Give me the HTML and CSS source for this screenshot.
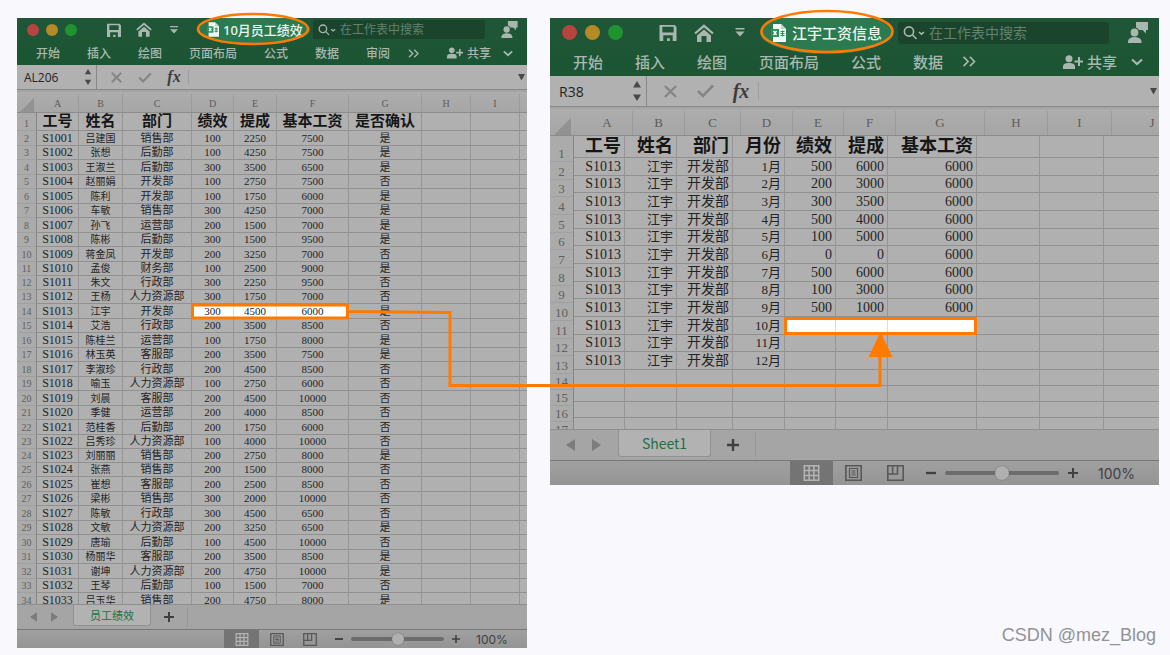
FILE: index.html
```html
<!DOCTYPE html>
<html lang="zh-CN">
<head>
<meta charset="utf-8">
<title>员工绩效与工资信息</title>
<link rel="stylesheet" href="styles.css">
</head>
<body>
<svg class="symbols" aria-hidden="true">
  <symbol id="save" viewBox="0 0 18 18"><path fill="currentColor" fill-rule="evenodd" d="M0 1h16l2 2v15H0zM3 3v6h12V3zM4 12v6h4v-3h3v3h3v-6z"/></symbol>
  <symbol id="home" viewBox="0 0 20 18"><path fill="none" stroke="currentColor" stroke-width="2.2" d="M1 9.5 10 1.8l9 7.7"/><path fill="currentColor" d="M3 11.5 10 5.5l7 6V18h-4.500v-6h-5v6H3z"/></symbol>
  <symbol id="more" viewBox="0 0 10 10"><path fill="currentColor" d="M0 0h10v1.600H0zM0 4h10L5 9.500z"/></symbol>
  <symbol id="book" viewBox="0 0 15 18"><path fill="#f2f7f3" d="M2 0h8l5 5v13H2z"/><path fill="#b9d8c5" d="M10 0v5h5z"/><path fill="#2b9059" d="M0 5h8v8H0z"/><path stroke="#fff" stroke-width="1.300" d="m2.500 7 3 4m0-4-3 4"/><path stroke="#2b9059" d="M9.500 7.500h4m-4 2h4m-4 2h4m-2-5v6"/></symbol>
  <symbol id="search" viewBox="0 0 22 14"><g fill="none" stroke="currentColor" stroke-width="1.600"><circle cx="6" cy="5.500" r="4.600"/><path d="m9.500 9 4 4M16 6l2.500 2.200L21 6"/></g></symbol>
  <symbol id="person" viewBox="0 0 20 21"><path fill="currentColor" d="M8 0h12v8h-2v3.500L14.500 8H11a4.500 4.500 0 0 0-3-2.500z"/><circle cx="6.500" cy="10.500" r="3.900" fill="currentColor"/><path fill="currentColor" d="M0 21v-2c1-3 3-4 6.500-4s6 1 7 4v2z"/></symbol>
  <symbol id="share" viewBox="0 0 20 14"><circle cx="6" cy="3.700" r="3.500" fill="currentColor"/><path fill="currentColor" d="M0 14v-3c.5-2 2-3 6-3s5.500 1 6 3v3z"/><path stroke="currentColor" stroke-width="2" d="M16 2v9m-4.500-4.500H20"/></symbol>
  <symbol id="chevron" viewBox="0 0 12 8"><path fill="none" stroke="currentColor" stroke-width="2.200" d="m1 1.500 5 4.500 5-4.500"/></symbol>
  <symbol id="double" viewBox="0 0 14 12"><path fill="none" stroke="currentColor" stroke-width="1.800" d="m1 1 5 5-5 5M8 1l5 5-5 5"/></symbol>
  <symbol id="stepper" viewBox="0 0 8 20"><path fill="currentColor" d="M0 6.500 4 0l4 6.500zM0 13.500 4 20l4-6.500z"/></symbol>
  <symbol id="cross" viewBox="0 0 14 14"><path stroke="currentColor" stroke-width="2.400" d="m1 1 12 12M13 1 1 13"/></symbol>
  <symbol id="check" viewBox="0 0 17 14"><path fill="none" stroke="currentColor" stroke-width="2.600" d="m1 7 5 5L16 1.500"/></symbol>
  <symbol id="down" viewBox="0 0 8 8"><path fill="currentColor" d="M0 0h8L4 7.500z"/></symbol>
  <symbol id="left" viewBox="0 0 9 12"><path fill="currentColor" d="M9 0v12L0 6z"/></symbol>
  <symbol id="right" viewBox="0 0 9 12"><path fill="currentColor" d="M0 0v12l9-6z"/></symbol>
  <symbol id="plus" viewBox="0 0 12 12"><path stroke="currentColor" stroke-width="2.400" d="M6 0v12M0 6h12"/></symbol>
  <symbol id="minus" viewBox="0 0 12 12"><path stroke="currentColor" stroke-width="2.800" d="M0 6h12"/></symbol>
  <symbol id="cells" viewBox="0 0 16 16"><path fill="none" stroke="currentColor" stroke-width="1.500" d="M.8.8h14.400v14.400H.8zM.8 5.600h14.400M.8 10.400h14.400M5.600.8v14.400M10.400.8v14.400"/></symbol>
  <symbol id="page" viewBox="0 0 17 16"><path fill="none" stroke="currentColor" stroke-width="1.600" d="M.8.8h15.400v14.400H.8z"/><path fill="none" stroke="currentColor" stroke-width="1.200" d="M4.500 3.500h8v9h-8zM6.500 6h4M6.500 8h4M6.500 10h4"/></symbol>
  <symbol id="breaks" viewBox="0 0 17 16"><path fill="none" stroke="currentColor" stroke-width="1.600" d="M.8.8h15.400v14.400H.8zM.8 9h9.700V.8M5.600.8V9"/></symbol>
</svg>

<main class="board">
  <section class="window window--performance">
    <header class="ribbon">
      <div class="titlebar">
        <span class="lights"><i class="light red"></i><i class="light amber"></i><i class="light green"></i></span>
        <button class="save" aria-label="保存"><svg><use href="#save"/></svg></button>
        <button class="home" aria-label="主页"><svg><use href="#home"/></svg></button>
        <button class="more" aria-label="更多"><svg><use href="#more"/></svg></button>
        <h1 class="title"><svg><use href="#book"/></svg><span>10月员工绩效</span></h1>
        <label class="search"><svg><use href="#search"/></svg><input type="search" placeholder="在工作表中搜索" aria-label="在工作表中搜索"></label>
        <button class="person" aria-label="账户"><svg><use href="#person"/></svg></button>
      </div>
      <nav class="menu">
        <button>开始</button><button>插入</button><button>绘图</button><button>页面布局</button><button>公式</button><button>数据</button><button>审阅</button>
        <button class="double" aria-label="更多选项卡"><svg><use href="#double"/></svg></button>
        <button class="share"><svg><use href="#share"/></svg>共享</button>
        <button class="chevron" aria-label="折叠"><svg><use href="#chevron"/></svg></button>
      </nav>
    </header>
    <div class="formula">
      <input class="name-box" value="AL206" aria-label="名称框">
      <svg class="stepper"><use href="#stepper"/></svg>
      <button class="cross" aria-label="取消"><svg><use href="#cross"/></svg></button>
      <button class="check" aria-label="确认"><svg><use href="#check"/></svg></button>
      <button class="fx">fx</button>
      <input class="expression" aria-label="公式">
      <button class="expand" aria-label="展开"><svg><use href="#down"/></svg></button>
    </div>
    <div class="letters"></div>
    <div class="sheet"><ol class="gutter"></ol><table></table></div>
    <div class="tabs">
      <button class="step" aria-label="上一个"><svg><use href="#left"/></svg></button>
      <button class="step" aria-label="下一个"><svg><use href="#right"/></svg></button>
      <button class="tab">员工绩效</button>
      <button class="add" aria-label="新建工作表"><svg><use href="#plus"/></svg></button>
    </div>
    <footer class="status">
      <button class="view active" aria-label="普通"><svg><use href="#cells"/></svg></button>
      <button class="view" aria-label="页面布局"><svg><use href="#page"/></svg></button>
      <button class="view breaks" aria-label="分页预览"><svg><use href="#breaks"/></svg></button>
      <button class="zoom-step" aria-label="缩小"><svg><use href="#minus"/></svg></button>
      <input class="zoom" type="range" aria-label="缩放">
      <button class="zoom-step" aria-label="放大"><svg><use href="#plus"/></svg></button>
      <output>100%</output>
    </footer>
  </section>

  <section class="window window--salary">
    <header class="ribbon">
      <div class="titlebar">
        <span class="lights"><i class="light red"></i><i class="light amber"></i><i class="light green"></i></span>
        <button class="save" aria-label="保存"><svg><use href="#save"/></svg></button>
        <button class="home" aria-label="主页"><svg><use href="#home"/></svg></button>
        <button class="more" aria-label="更多"><svg><use href="#more"/></svg></button>
        <h1 class="title"><svg><use href="#book"/></svg><span>江宇工资信息</span></h1>
        <label class="search"><svg><use href="#search"/></svg><input type="search" placeholder="在工作表中搜索" aria-label="在工作表中搜索"></label>
        <button class="person" aria-label="账户"><svg><use href="#person"/></svg></button>
      </div>
      <nav class="menu">
        <button>开始</button><button>插入</button><button>绘图</button><button>页面布局</button><button>公式</button><button>数据</button>
        <button class="double" aria-label="更多选项卡"><svg><use href="#double"/></svg></button>
        <button class="share"><svg><use href="#share"/></svg>共享</button>
        <button class="chevron" aria-label="折叠"><svg><use href="#chevron"/></svg></button>
      </nav>
    </header>
    <div class="formula">
      <input class="name-box" value="R38" aria-label="名称框">
      <svg class="stepper"><use href="#stepper"/></svg>
      <button class="cross" aria-label="取消"><svg><use href="#cross"/></svg></button>
      <button class="check" aria-label="确认"><svg><use href="#check"/></svg></button>
      <button class="fx">fx</button>
      <input class="expression" aria-label="公式">
      <button class="expand" aria-label="展开"><svg><use href="#down"/></svg></button>
    </div>
    <div class="letters"></div>
    <div class="sheet"><ol class="gutter"></ol><table></table></div>
    <div class="tabs">
      <button class="step" aria-label="上一个"><svg><use href="#left"/></svg></button>
      <button class="step" aria-label="下一个"><svg><use href="#right"/></svg></button>
      <button class="tab">Sheet1</button>
      <button class="add" aria-label="新建工作表"><svg><use href="#plus"/></svg></button>
    </div>
    <footer class="status">
      <button class="view active" aria-label="普通"><svg><use href="#cells"/></svg></button>
      <button class="view" aria-label="页面布局"><svg><use href="#page"/></svg></button>
      <button class="view breaks" aria-label="分页预览"><svg><use href="#breaks"/></svg></button>
      <button class="zoom-step" aria-label="缩小"><svg><use href="#minus"/></svg></button>
      <input class="zoom" type="range" aria-label="缩放">
      <button class="zoom-step" aria-label="放大"><svg><use href="#plus"/></svg></button>
      <output>100%</output>
    </footer>
  </section>

  <svg class="annotations" width="1170" height="655" viewBox="0 0 1170 655" fill="none" stroke="#ff7b00" aria-hidden="true">
    <ellipse cx="253" cy="29" rx="55" ry="15" stroke-width="2.500"/>
    <ellipse cx="827" cy="31.500" rx="65.500" ry="20.500" stroke-width="2.500"/>
    <path stroke-width="3" d="M192.500 305h155v13h-155zM785.500 318.500h190v15h-190zM348 311.500l102 1v73h430v-30"/>
    <path fill="#ff7b00" stroke="none" d="m880.500 332 12 25h-24z"/>
  </svg>
  <p class="watermark">CSDN @mez_Blog</p>
</main>
<script src="app.js"></script>
</body>
</html>
```

FILE: styles.css
```css
* { box-sizing: border-box; }
body { margin: 0; background: #f8f8fd; color: #242424; font-family: "Noto Sans", "Noto Sans CJK SC", sans-serif; }
.symbols { display: none; }
button { display: flex; align-items: center; justify-content: center; flex: none; margin: 0; padding: 0; border: 0; background: none; color: inherit; font: inherit; white-space: nowrap; }
input { margin: 0; padding: 0; border: 0; outline: 0; background: none; color: inherit; font: inherit; min-width: 0; }
svg { display: block; flex: none; }

.board { position: relative; display: flex; align-items: flex-start; gap: 23px; min-height: 655px; padding: 18px 11px 7px 17px; }
.annotations { position: absolute; left: 0; top: 0; pointer-events: none; }
.watermark { position: absolute; right: 14px; bottom: 8px; margin: 0; color: #929297; font: 18px/24px "Liberation Sans", sans-serif; }

.window { min-width: 0; overflow: hidden; background: #b0b0b0; font-size: var(--ui); }
.window--performance {
  flex: 510 1 0;
  --ui: 12px; --title: 13px; --find: 12px; --bar: 23px; --menu: 24px; --menu-gap: 27px; --menu-pad: 19px;
  --light: 12px; --light-gap: 7px; --edge: 10px;
  --formula: 25px; --letters: 20px; --letter: 10px; --corner: 20px; --shift: 0px;
  --tabs: 25px; --status: 18px;
}
.window--salary {
  flex: 609 1 0;
  --ui: 15px; --title: 15px; --find: 14px; --bar: 29px; --menu: 29px; --menu-gap: 32px; --menu-pad: 23px;
  --light: 15px; --light-gap: 8px; --edge: 12px;
  --formula: 31px; --letters: 26px; --letter: 13px; --corner: 24px; --shift: 8px;
  --tabs: 31px; --status: 24px;
}

.ribbon { background: linear-gradient(#205638, #1b5533); color: #a9b8ae; }
.titlebar { display: flex; align-items: center; height: var(--bar); padding: 0 9px 0 var(--edge); }
.lights { display: flex; gap: var(--light-gap); }
.light { width: var(--light); height: var(--light); border-radius: 50%; }
.red { background: #b6443f; }
.amber { background: #b58a26; }
.green { background: #1e9330; }
.save { margin-left: 30px; }
.save svg { width: 14px; height: 14px; }
.home { margin-left: 15px; }
.home svg { width: 16px; height: 15px; }
.more { margin-left: 18px; }
.more svg { width: 8px; height: 8px; }
.title { position: relative; z-index: 0; display: flex; flex: none; align-items: center; gap: 4px; margin: 0 0 0 29px; color: #eef5f0; font-size: var(--title); font-weight: 500; line-height: 20px; white-space: nowrap; }
.title::before { content: ""; position: absolute; z-index: -1; inset: -6px -7px -5px -10px; border-radius: 50%; background: #2c7b50; }
.title svg { width: 12px; height: 15px; }
.search { display: flex; align-items: center; gap: 4px; flex: 0 1 172px; min-width: 0; height: 19px; margin-left: 10px; padding-left: 5px; border-radius: 3px; background: #1a452c; font-size: var(--find); }
.search svg { width: 18px; height: 12px; }
.search input { flex: 1; width: 0; }
.search input::placeholder { color: #62816e; opacity: 1; }
.person { margin-left: auto; }
.person svg { width: 17px; height: 17px; }
.menu { display: flex; align-items: center; gap: var(--menu-gap); height: var(--menu); padding: 0 14px 0 var(--menu-pad); font-weight: 500; }
.double { margin-left: -9px; }
.double svg { width: 11px; height: 9px; }
.share { gap: 4px; margin-left: auto; }
.share svg { width: 16px; height: 12px; }
.chevron { margin-left: -15px; }
.chevron svg { width: 10px; height: 7px; }

.formula { display: flex; align-items: center; height: var(--formula); border-bottom: 1px solid #888; background: #b1b1b1; }
.name-box { width: 67px; padding-left: 7px; font-family: "Open Sans", sans-serif; }
.stepper { width: 8px; height: 16px; color: #484848; }
.cross { margin-left: 4px; padding-left: 14px; border-left: 1px solid #888; height: 100%; color: #858585; }
.cross svg { width: 11px; height: 11px; }
.check { margin-left: 16px; color: #858585; }
.check svg { width: 14px; height: 11px; }
.fx { width: 16px; margin-left: 14px; color: #3c3c3c; font: italic bold 16px "Liberation Serif", serif; }
.expression { flex: 1; height: 60%; margin-left: 6px; border-left: 1px solid #9d9d9d; }
.expand { margin-right: 2px; color: #484848; }
.expand svg { width: 7px; height: 7px; }

.letters { display: flex; height: calc(var(--letters) + 3px); padding-top: 2px; border-top: 2px solid #a4a4a4; border-bottom: 1px solid #8c8c8c; background: linear-gradient(#adadad, #a6a6a6); color: #5c5c5c; font: var(--letter) "Liberation Serif", "Noto Sans CJK SC", serif; }
.letters span { display: flex; flex: none; align-items: center; justify-content: center; border-right: 1px solid #9b9b9b; }
.letters span:last-child { border: 0; }
.letters .corner { width: calc(var(--corner) + var(--shift)); padding-right: calc(var(--shift) + 3px); align-items: flex-end; justify-content: flex-end; border-right: 0; }
.corner svg { width: 14px; height: 14px; color: #929292; }

.sheet { display: flex; align-items: flex-start; overflow: hidden; border-bottom: 1px solid #8e8e8e; font: 11px/13px "Liberation Serif", "Noto Sans CJK SC", serif; }
.gutter { flex: none; width: var(--corner); margin: 0; padding: 0; list-style: none; border-right: 1px solid #858585; background: #ababab; color: #606060; text-align: center; }
.gutter li { display: flex; align-items: flex-end; justify-content: center; border-bottom: 1px solid #a0a0a0; }
.sheet table { flex: 1; width: 0; table-layout: fixed; border-collapse: separate; border-spacing: 0; }
.sheet th, .sheet td { padding: 0; overflow: hidden; border-right: 1px solid #959595; border-bottom: 1px solid #909090; text-align: center; white-space: nowrap; }
.sheet th:last-child, .sheet td:last-child { border-right: 0; }
.sheet td { font-weight: 400; }
.sheet th { color: #161616; font-size: 15px; line-height: 17px; font-weight: 700; }
.sheet .picked { background: #fff; border-right-color: #ddd; }

.window--performance .sheet { height: 492px; }
.window--performance .sheet tr, .window--performance .gutter li { height: 14px; }
.window--performance .sheet tr:nth-child(even), .window--performance .gutter li:nth-child(even) { height: 15px; }
.window--performance .sheet tr:nth-child(12n), .window--performance .gutter li:nth-child(12n) { height: 14px; }
.window--performance .sheet tr:first-child, .window--performance .gutter li:first-child { height: 18px; }
.window--performance .gutter { font-size: 10px; line-height: 13px; }
.window--performance td:first-child { font-size: 12px; }
.window--performance td:nth-child(2) { font-size: 10px; }

.window--salary .sheet { height: 294px; font-size: 14px; line-height: 16px; }
.window--salary .sheet tr, .window--salary .gutter li { height: 18px; }
.window--salary .sheet tr:nth-child(3n), .window--salary .gutter li:nth-child(3n) { height: 17px; }
.window--salary .sheet tr:nth-child(n+14), .window--salary .gutter li:nth-child(n+14) { height: 16px; }
.window--salary .sheet tr:first-child { height: 22px; }
.window--salary .gutter li:first-child { height: 26px; }
.window--salary .gutter { font-size: 13px; line-height: 15px; }
.window--salary th { padding-right: 3px; font-size: 18px; line-height: 21px; text-align: right; }
.window--salary td { padding-right: 3px; text-align: right; }
.window--salary td:nth-child(2), .window--salary td:nth-child(4) { font-size: 13px; }

.tabs { display: flex; align-items: center; height: var(--tabs); border-bottom: 1px solid #777; background: #a5a5a5; }
.step { width: 9px; margin-left: 12px; color: #7c7c7c; }
.step svg { width: 7px; height: 10px; }
.tab { align-self: flex-start; width: 78px; height: 21px; margin-left: 14px; border: 1px solid #929292; border-top: 0; border-radius: 0 0 3px 3px; background: #b2b2b2; color: #21713f; font-size: 11px; font-weight: 400; }
.add { width: 37px; height: 80%; border-right: 1px solid #969696; color: #404040; }
.add svg { width: 10px; height: 10px; }

.status { display: flex; align-items: center; justify-content: flex-end; height: var(--status); padding-right: 21px; background: linear-gradient(#a0a0a0, #949494); color: #404040; }
.view { margin-right: 19px; color: #585858; }
.view svg { width: 14px; height: 13px; }
.view.active { width: 35px; height: 100%; margin-right: 11px; background: #747474; color: #b5b5b5; }
.view.breaks { margin-right: 18px; }
.zoom-step svg { width: 8px; height: 8px; }
.zoom { appearance: none; width: 93px; height: 12px; margin: 0 8px; }
.zoom::-webkit-slider-runnable-track { height: 4px; border-radius: 2px; background: #6c6c6c; }
.zoom::-webkit-slider-thumb { appearance: none; width: 12px; height: 12px; margin-top: -4px; border-radius: 50%; background: #b0b0b0; box-shadow: 0 0 1px #555; }
output { width: 30px; margin-left: 16px; font-family: "Inter", sans-serif; font-size: 12px; }

.window--salary .titlebar { padding-right: 11px; }
.window--salary .save { margin-left: 36px; }
.window--salary .save svg { width: 18px; height: 17px; }
.window--salary .home { margin-left: 17px; }
.window--salary .home svg { width: 20px; height: 18px; }
.window--salary .more { margin-left: 21px; }
.window--salary .more svg { width: 10px; height: 9px; }
.window--salary .title { gap: 6px; margin-left: 26px; }
.window--salary .title svg { width: 15px; height: 18px; }
.window--salary .title::before { inset: -11px -10px -11px -11px; }
.window--salary .search { flex-basis: 211px; height: 22px; margin-left: 16px; }
.window--salary .search svg { width: 22px; height: 14px; }
.window--salary .person svg { width: 20px; height: 21px; }
.window--salary .menu { padding-right: 16px; }
.window--salary .double { margin-left: -13px; }
.window--salary .double svg { width: 14px; height: 11px; }
.window--salary .share svg { width: 20px; height: 14px; }
.window--salary .chevron { margin-left: -18px; }
.window--salary .chevron svg { width: 12px; height: 8px; }
.window--salary .name-box { width: 83px; padding-left: 9px; font-size: 14px; }
.window--salary .stepper { height: 20px; }
.window--salary .cross { margin-left: 5px; padding-left: 17px; }
.window--salary .cross svg { width: 13px; height: 13px; }
.window--salary .check { margin-left: 20px; }
.window--salary .check svg { width: 17px; height: 14px; }
.window--salary .fx { width: 18px; margin-left: 18px; font-size: 20px; }
.window--salary .expression { margin-left: 8px; }
.window--salary .corner svg { width: 17px; height: 17px; }
.window--salary .step { margin-left: 15px; width: 11px; }
.window--salary .step svg { width: 9px; height: 12px; }
.window--salary .tab { width: 93px; height: 27px; margin-left: 16px; font-size: 14px; font-family: "Noto Sans CJK SC", sans-serif; }
.window--salary .add { width: 45px; }
.window--salary .add svg { width: 12px; height: 12px; }
.window--salary .status { padding-right: 24px; }
.window--salary .view { margin-right: 25px; }
.window--salary .view svg { width: 17px; height: 16px; }
.window--salary .view.active { width: 43px; margin-right: 12px; }
.window--salary .view.breaks { margin-right: 22px; }
.window--salary .zoom-step svg { width: 10px; height: 10px; }
.window--salary .zoom { width: 114px; height: 14px; margin: 0 9px; }
.window--salary .zoom::-webkit-slider-thumb { width: 14px; height: 14px; margin-top: -5px; }
.window--salary output { width: 37px; margin-left: 20px; font-size: 14px; }
```

FILE: app.js
```js
const performance10 = `S1001 吕建国 销售部 100 2250 7500 是
S1002 张想 后勤部 100 4250 7500 是
S1003 王淑兰 后勤部 300 3500 6500 是
S1004 赵丽娟 开发部 100 2750 7500 否
S1005 陈利 开发部 100 1750 6000 是
S1006 车敏 销售部 300 4250 7000 是
S1007 孙飞 运营部 200 1500 7000 是
S1008 陈彬 后勤部 300 1500 9500 是
S1009 蒋金凤 开发部 200 3250 7000 否
S1010 孟俊 财务部 100 2500 9000 是
S1011 朱文 行政部 300 2250 9500 否
S1012 王杨 人力资源部 300 1750 7000 否
S1013 江宇 开发部 300 4500 6000 是
S1014 艾浩 行政部 200 3500 8500 否
S1015 陈桂兰 运营部 100 1750 8000 是
S1016 林玉英 客服部 200 3500 7500 是
S1017 李淑珍 行政部 200 4500 8500 否
S1018 喻玉 人力资源部 100 2750 6000 否
S1019 刘晨 客服部 200 4500 10000 否
S1020 季健 运营部 200 4000 8500 否
S1021 范桂香 后勤部 200 1750 6000 否
S1022 吕秀珍 人力资源部 100 4000 10000 否
S1023 刘丽丽 销售部 200 2750 8000 是
S1024 张燕 销售部 200 1500 8000 否
S1025 崔想 客服部 200 2500 8500 否
S1026 梁彬 销售部 300 2000 10000 否
S1027 陈敏 行政部 300 4500 6500 否
S1028 文敏 人力资源部 200 3250 6500 是
S1029 唐瑜 后勤部 100 4500 10000 否
S1030 杨丽华 客服部 200 3500 8500 是
S1031 谢坤 人力资源部 200 4750 10000 是
S1032 王琴 后勤部 100 1500 7000 否
S1033 吕玉华 销售部 200 4750 8000 是`.split('\n').map(line => line.split(' '));

const months = [[500, 6000], [200, 3000], [300, 3500], [500, 4000], [100, 5000], [0, 0], [500, 6000], [100, 3000], [500, 1000], [], [], []];
const salary = months.map(([bonus, commission], i) => {
  const row = ['S1013', '江宇', '开发部', `${i + 1}月`];
  return bonus === undefined ? row : [...row, bonus, commission, 6000];
});

function fill(selector, widths, head, rows, rowCount, pickedRow, pickedFrom, pickedTo) {
  const root = document.querySelector(selector);
  const columns = widths.length + 1;
  const letters = [...'ABCDEFGHIJ'].slice(0, columns);
  const corner = '<span class="corner"><svg viewBox="0 0 10 10"><path fill="currentColor" d="M10 0v10H0z"/></svg></span>';
  root.querySelector('.letters').innerHTML = corner + letters.map((letter, i) =>
    `<span style="width:${widths[i] ?? 80}px">${letter}</span>`).join('');
  root.querySelector('.gutter').innerHTML = Array.from({ length: rowCount }, (_, i) => `<li>${i + 1}</li>`).join('');
  const lines = Array.from({ length: rowCount }, (_, r) => {
    const data = r === 0 ? head : rows[r - 1] || [];
    const tag = r === 0 ? 'th' : 'td';
    return '<tr>' + letters.map((_, c) => {
      const picked = r + 1 === pickedRow && c >= pickedFrom && c <= pickedTo;
      return `<${tag}${picked ? ' class="picked"' : ''}>${data[c] ?? ''}</${tag}>`;
    }).join('') + '</tr>';
  });
  root.querySelector('table').innerHTML =
    '<colgroup>' + widths.map(w => `<col style="width:${w}px">`).join('') + '<col></colgroup><tbody>' + lines.join('') + '</tbody>';
}

fill('.window--performance', [42, 44, 69, 42, 43, 72, 73, 49, 49],
  ['工号', '姓名', '部门', '绩效', '提成', '基本工资', '是否确认'], performance10, 34, 14, 3, 5);
document.querySelector('.window--performance .letters span:last-child').textContent = '';
fill('.window--salary', [51, 52, 56, 52, 51, 52, 89, 63, 64],
  ['工号', '姓名', '部门', '月份', '绩效', '提成', '基本工资'], salary, 17, 11, 4, 6);
```
